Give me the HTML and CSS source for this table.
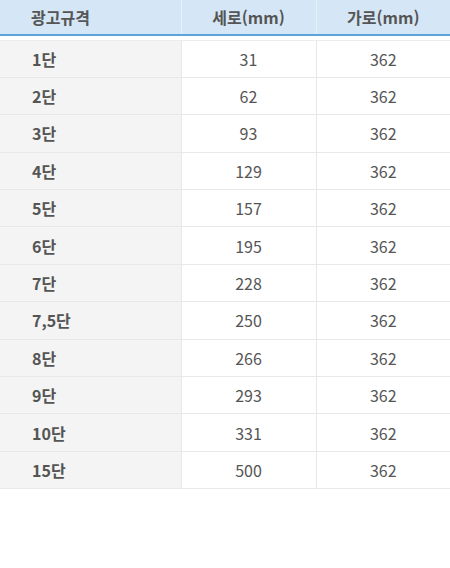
FILE: index.html
```html
<!DOCTYPE html>
<html lang="ko">
<head>
<meta charset="utf-8">
<link rel="stylesheet" href="styles.css">
</head>
<body>
<table class="spec">
  <colgroup>
    <col class="col-name">
    <col class="col-h">
    <col class="col-w">
  </colgroup>
  <thead>
    <tr>
      <th class="first">광고규격</th>
      <th>세로(mm)</th>
      <th>가로(mm)</th>
    </tr>
  </thead>
  <tbody>
    <tr class="spacer"><td colspan="3"></td></tr>
    <tr><td class="name">1단</td><td>31</td><td>362</td></tr>
    <tr><td class="name">2단</td><td>62</td><td>362</td></tr>
    <tr><td class="name">3단</td><td>93</td><td>362</td></tr>
    <tr><td class="name">4단</td><td>129</td><td>362</td></tr>
    <tr><td class="name">5단</td><td>157</td><td>362</td></tr>
    <tr><td class="name">6단</td><td>195</td><td>362</td></tr>
    <tr><td class="name">7단</td><td>228</td><td>362</td></tr>
    <tr><td class="name">7,5단</td><td>250</td><td>362</td></tr>
    <tr><td class="name">8단</td><td>266</td><td>362</td></tr>
    <tr><td class="name">9단</td><td>293</td><td>362</td></tr>
    <tr><td class="name">10단</td><td>331</td><td>362</td></tr>
    <tr><td class="name">15단</td><td>500</td><td>362</td></tr>
  </tbody>
</table>
</body>
</html>
```
FILE: styles.css
```css
html, body {
  margin: 0;
  padding: 0;
  background: #ffffff;
}
body {
  font-family: "Noto Sans CJK KR", "Noto Sans", sans-serif;
  color: #555555;
}
*, *::before, *::after {
  box-sizing: border-box;
}
.spec {
  width: 450px;
  border-collapse: collapse;
  table-layout: fixed;
}
.col-name { width: 181px; }
.col-h { width: 135px; }
.col-w { width: 134px; }

.spec thead th {
  height: 35px;
  padding: 0;
  background: #d5e7f6;
  border-bottom: 2px solid #5ca3db;
  font-size: 16px;
  font-weight: 700;
  color: #555555;
  text-align: center;
  line-height: 34px;
}
.spec thead th + th {
  border-left: 1px solid #e6f0f8;
}
.spec thead th.first {
  text-align: left;
  padding-left: 31px;
}

.spec tbody tr.spacer td {
  height: 5px;
  padding: 0;
  border: none;
  border-bottom: 1px solid #ececec;
  background: #ffffff;
}

.spec tbody td {
  height: 37.4px;
  padding: 0;
  font-size: 16px;
  text-align: center;
  color: #555555;
  border-bottom: 1px solid #e8e8e8;
  background: #ffffff;
}
.spec tbody td + td {
  border-left: 1px solid #e8e8e8;
}
.spec tbody td.name {
  text-align: left;
  padding-left: 32px;
  font-weight: 700;
  background: #f4f4f4;
}
```
